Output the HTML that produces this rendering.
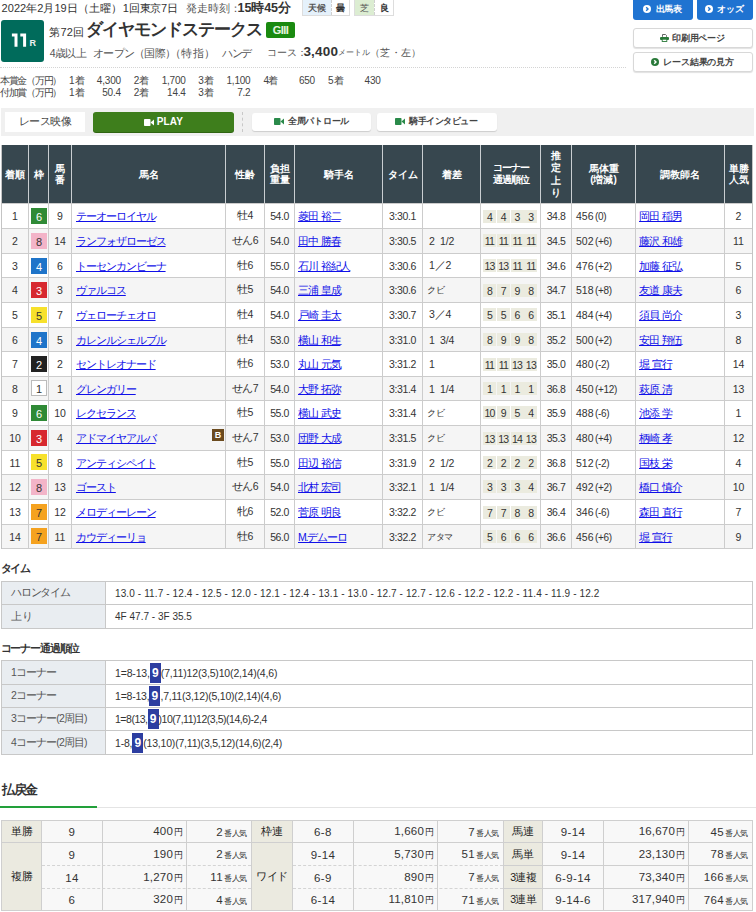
<!DOCTYPE html>
<html lang="ja"><head><meta charset="utf-8"><title>レース結果</title>
<style>
html,body{margin:0;padding:0;background:#fff;width:756px;height:912px;overflow:hidden;position:relative}
body{font-family:"Liberation Sans",sans-serif;}
body>div,body>svg{position:absolute}
.t{white-space:nowrap}
.c{display:flex;align-items:center;box-sizing:border-box;white-space:nowrap}

.a{color:#1010e8;text-decoration:underline;text-underline-offset:1px}
.n9{display:inline-block;background:#2c3da0;color:#fff;font-weight:bold;width:11px;height:20px;line-height:20px;text-align:center;font-size:12px;letter-spacing:0;margin:0}
.sm{font-size:8.5px;letter-spacing:0;margin-left:1px}
.sm2{font-size:8px;letter-spacing:-0.3px;margin-left:1px}

</style></head><body>
<div class="t" style="left:1.60px;top:1px;font-size:11px;line-height:14px;color:#333;"><span id="date" style="letter-spacing:0.034px">2022年2月19日（土曜）</span></div>
<div class="t" style="left:122.80px;top:1px;font-size:11px;line-height:14px;color:#333;"><span id="kai" style="letter-spacing:-0.200px">1回東京7日</span></div>
<div class="t" style="left:186.40px;top:1px;font-size:10.5px;line-height:14px;color:#555;"><span id="hasso" style="letter-spacing:-0.200px">発走時刻：</span></div>
<div class="t" style="left:237.60px;top:0.5px;font-size:12.5px;line-height:15px;color:#333;"><span id="time" style="letter-spacing:-0.120px"><b>15時45分</b></span></div>
<div style="left:302px;top:-1px;width:48px;height:17px;border:1px solid #ddd;box-sizing:border-box;background:#fff"></div>
<div style="left:303px;top:0px;width:28px;height:15px;background:#e5f1fb"></div>
<div style="left:331px;top:0px;width:0;height:15px;border-left:1px dashed #d0d0d0"></div>
<div class="c" style="left:302px;top:0px;width:29px;height:15px;justify-content:center;font-size:9px;color:#555;padding-top:1px;font-weight:bold"><span style="letter-spacing:0.000px">天候</span></div>
<div class="c" style="left:331px;top:0px;width:19px;height:15px;justify-content:center;font-size:9px;color:#333;padding-top:1px;font-weight:bold"><span style="letter-spacing:0.000px">曇</span></div>
<div style="left:354px;top:-1px;width:40px;height:17px;border:1px solid #ddd;box-sizing:border-box;background:#fff"></div>
<div style="left:355px;top:0px;width:19px;height:15px;background:#dcedd2"></div>
<div style="left:374px;top:0px;width:0;height:15px;border-left:1px dashed #d0d0d0"></div>
<div class="c" style="left:354px;top:0px;width:20px;height:15px;justify-content:center;font-size:9px;color:#555;padding-top:1px;"><span style="letter-spacing:0.000px">芝</span></div>
<div class="c" style="left:374px;top:0px;width:20px;height:15px;justify-content:center;font-size:9px;color:#333;padding-top:1px;font-weight:bold"><span style="letter-spacing:0.000px">良</span></div>
<div style="left:1px;top:20px;width:43px;height:42px;background:#006b5b;border-radius:3px"></div>
<svg style="position:absolute;left:0;top:0" width="50" height="60"><path d="M11.9 33.6 L17.5 33.6 L17.5 46.8 L14.5 46.8 L14.5 36.4 L11.9 36.4 Z M20.3 33.6 L26.1 33.6 L26.1 46.8 L23.1 46.8 L23.1 36.4 L20.3 36.4 Z" fill="#fff"/></svg>
<div class="t" style="left:29.60px;top:39px;font-size:9px;line-height:9px;color:#f0f0f0"><span style="letter-spacing:0.000px"><b>R</b></span></div>
<div class="t" style="left:49.20px;top:25px;font-size:11px;line-height:14px;color:#333;"><span id="dai" style="letter-spacing:0.264px">第72回</span></div>
<div class="t" style="left:86.00px;top:19px;font-size:16.5px;line-height:20px;color:#333;"><span id="title" style="letter-spacing:-1.000px"><b>ダイヤモンドステークス</b></span></div>
<div style="left:266px;top:22px;width:29px;height:16px;background:#1a8a10;border-radius:2px"></div>
<div class="c" style="left:266px;top:22px;width:29px;height:16px;justify-content:center;font-size:11px;color:#e8f5e0;"><span style="letter-spacing:-0.600px"><b>GIII</b></span></div>
<div class="t" style="left:49.80px;top:46px;font-size:10.5px;line-height:14px;color:#555;"><span id="sai" style="letter-spacing:-0.597px">4歳以上</span></div>
<div class="t" style="left:93.20px;top:46px;font-size:10.5px;line-height:14px;color:#555;"><span id="open" style="letter-spacing:-0.768px">オープン（国際）</span></div>
<div class="t" style="left:169.80px;top:46px;font-size:10.5px;line-height:14px;color:#555;"><span id="tokushi" style="letter-spacing:0.402px">（特指）</span></div>
<div class="t" style="left:222.00px;top:46px;font-size:10.5px;line-height:14px;color:#555;"><span id="hande" style="letter-spacing:-1.500px">ハンデ</span></div>
<div class="t" style="left:267.00px;top:46px;font-size:10px;line-height:14px;color:#555;"><span id="course" style="letter-spacing:-0.000px">コース：</span></div>
<div class="t" style="left:303.40px;top:44px;font-size:13.5px;line-height:16px;color:#333;"><span id="dist" style="letter-spacing:0.200px"><b>3,400</b></span></div>
<div class="t" style="left:338.00px;top:48px;font-size:8px;line-height:10px;color:#555;"><span id="meter" style="letter-spacing:0.000px">メートル</span></div>
<div class="t" style="left:370.00px;top:46px;font-size:10px;line-height:14px;color:#555;"><span id="shiba" style="letter-spacing:0.250px">（芝・左）</span></div>
<div style="left:0;top:67px;width:626px;height:0;border-top:1px dotted #d4d4d4"></div>
<div class="t" style="left:0.00px;top:75px;font-size:10px;line-height:12px;color:#444;"><span id="hon" style="letter-spacing:-1.264px">本賞金（万円）</span></div>
<div class="t" style="left:0.00px;top:87px;font-size:10px;line-height:12px;color:#444;"><span id="fuka" style="letter-spacing:-1.264px">付加賞（万円）</span></div>
<div class="t" style="left:69.00px;top:75px;font-size:10px;line-height:12px;color:#444;"><span id="ch10" style="letter-spacing:0.000px">1着</span></div>
<div class="t" style="left:85px;top:75px;width:35.9px;text-align:right;font-size:10px;line-height:12px;color:#444;letter-spacing:-0.2px">4,300</div>
<div class="t" style="left:69.00px;top:87px;font-size:10px;line-height:12px;color:#444;"><span id="ch20" style="letter-spacing:0.000px">1着</span></div>
<div class="t" style="left:85px;top:87px;width:35.9px;text-align:right;font-size:10px;line-height:12px;color:#444;letter-spacing:-0.2px">50.4</div>
<div class="t" style="left:133.80px;top:75px;font-size:10px;line-height:12px;color:#444;"><span id="ch11" style="letter-spacing:0.000px">2着</span></div>
<div class="t" style="left:149.4px;top:75px;width:36.3px;text-align:right;font-size:10px;line-height:12px;color:#444;letter-spacing:-0.2px">1,700</div>
<div class="t" style="left:133.80px;top:87px;font-size:10px;line-height:12px;color:#444;"><span id="ch21" style="letter-spacing:0.000px">2着</span></div>
<div class="t" style="left:149.4px;top:87px;width:36.3px;text-align:right;font-size:10px;line-height:12px;color:#444;letter-spacing:-0.2px">14.4</div>
<div class="t" style="left:198.30px;top:75px;font-size:10px;line-height:12px;color:#444;"><span id="ch12" style="letter-spacing:0.000px">3着</span></div>
<div class="t" style="left:213.9px;top:75px;width:36.6px;text-align:right;font-size:10px;line-height:12px;color:#444;letter-spacing:-0.2px">1,100</div>
<div class="t" style="left:198.30px;top:87px;font-size:10px;line-height:12px;color:#444;"><span id="ch22" style="letter-spacing:0.000px">3着</span></div>
<div class="t" style="left:213.9px;top:87px;width:36.6px;text-align:right;font-size:10px;line-height:12px;color:#444;letter-spacing:-0.2px">7.2</div>
<div class="t" style="left:263.60px;top:75px;font-size:10px;line-height:12px;color:#444;"><span id="ch13" style="letter-spacing:-1.000px">4着</span></div>
<div class="t" style="left:278.8px;top:75px;width:36.2px;text-align:right;font-size:10px;line-height:12px;color:#444;letter-spacing:-0.2px">650</div>
<div class="t" style="left:328.00px;top:75px;font-size:10px;line-height:12px;color:#444;"><span id="ch14" style="letter-spacing:0.000px">5着</span></div>
<div class="t" style="left:344px;top:75px;width:36.7px;text-align:right;font-size:10px;line-height:12px;color:#444;letter-spacing:-0.2px">430</div>
<div style="left:633px;top:-4px;width:60px;height:24px;background:#1f73d1;border-radius:3px"></div>
<div style="left:697px;top:-4px;width:56px;height:24px;background:#1f73d1;border-radius:3px"></div>
<div style="left:643px;top:5px;width:8px;height:8px;border-radius:50%;background:#fff"></div>
<svg style="position:absolute;left:643px;top:5px" width="8" height="8" viewBox="0 0 8 8"><path d="M3.2 2.2 L5 4 L3.2 5.8" stroke="#1f73d1" stroke-width="1.4" fill="none"/></svg>
<div class="t" style="left:655.80px;top:3px;font-size:9px;line-height:12px;color:#fff;"><span id="b1" style="letter-spacing:-0.400px"><b>出馬表</b></span></div>
<div style="left:705px;top:5px;width:8px;height:8px;border-radius:50%;background:#fff"></div>
<svg style="position:absolute;left:705px;top:5px" width="8" height="8" viewBox="0 0 8 8"><path d="M3.2 2.2 L5 4 L3.2 5.8" stroke="#1f73d1" stroke-width="1.4" fill="none"/></svg>
<div class="t" style="left:717.00px;top:3px;font-size:9px;line-height:12px;color:#fff;"><span id="b2" style="letter-spacing:0.000px"><b>オッズ</b></span></div>
<div style="left:633px;top:28px;width:120px;height:20px;background:#fff;border:1px solid #d8d8d8;border-radius:3px;box-sizing:border-box;box-shadow:0 1px 1px rgba(0,0,0,0.12)"></div>
<svg style="position:absolute;left:660px;top:34px" width="9" height="8" viewBox="0 0 9 8"><path d="M2.5 2.8 V0.5 H5.5 L6.5 1.5 V2.8" fill="#fff" stroke="#555" stroke-width="0.9"/><rect x="0" y="3" width="9" height="3" rx="1" fill="#2a7a3a"/><rect x="2.2" y="5.2" width="4.6" height="2.3" fill="#fff" stroke="#2a7a3a" stroke-width="0.9"/></svg>
<div class="t" style="left:672.00px;top:32px;font-size:9px;line-height:12px;color:#444;"><span id="b3" style="letter-spacing:-0.240px"><b>印刷用ページ</b></span></div>
<div style="left:633px;top:52px;width:120px;height:20px;background:#fff;border:1px solid #d8d8d8;border-radius:3px;box-sizing:border-box;box-shadow:0 1px 1px rgba(0,0,0,0.12)"></div>
<div style="left:651px;top:58px;width:8px;height:8px;border-radius:50%;background:#2a7a3a"></div>
<svg style="position:absolute;left:651px;top:58px" width="8" height="8" viewBox="0 0 8 8"><path d="M3.2 2.2 L5 4 L3.2 5.8" stroke="#fff" stroke-width="1.4" fill="none"/></svg>
<div class="t" style="left:663.00px;top:56px;font-size:9px;line-height:12px;color:#444;"><span id="b4" style="letter-spacing:-0.116px"><b>レース結果の見方</b></span></div>
<div style="left:1px;top:108px;width:753px;height:28px;background:#f0f0f0"></div>
<div style="left:5px;top:112px;width:80px;height:20px;background:#fff"></div>
<div class="c" style="left:5px;top:112px;width:80px;height:20px;justify-content:center;font-size:10.5px;color:#444;"><span id="eizo" style="letter-spacing:-0.650px">レース映像</span></div>
<div style="left:93px;top:112px;width:141px;height:20px;background:#3e7e1c;border-radius:3px;box-shadow:0 1px 0 #2f6512"></div>
<svg style="position:absolute;left:144px;top:119px" width="10" height="7" viewBox="0 0 10 7"><rect x="0" y="0" width="6.5" height="7" rx="0.8" fill="#fff"/><path d="M6.5 3.5 L10 0.5 L10 6.5 Z" fill="#fff"/></svg>
<div class="t" style="left:156.80px;top:116px;font-size:10px;line-height:12px;color:#fff;"><span id="play" style="letter-spacing:0.133px"><b>PLAY</b></span></div>
<div style="left:242px;top:112px;width:0;height:20px;border-left:1px dashed #c8c8c8"></div>
<div style="left:252px;top:113px;width:119px;height:18px;background:#fff;border-radius:3px;box-shadow:0 1px 1px rgba(0,0,0,0.15)"></div>
<svg style="position:absolute;left:274px;top:118px" width="10" height="7" viewBox="0 0 10 7"><rect x="0" y="0" width="6.5" height="7" rx="0.8" fill="#2a8a4a"/><path d="M6.5 3.5 L10 0.5 L10 6.5 Z" fill="#2a8a4a"/></svg>
<div class="t" style="left:287.80px;top:115px;font-size:9px;line-height:12px;color:#444;"><span id="patrol" style="letter-spacing:-0.236px"><b>全周パトロール</b></span></div>
<div style="left:377px;top:113px;width:120px;height:18px;background:#fff;border-radius:3px;box-shadow:0 1px 1px rgba(0,0,0,0.15)"></div>
<svg style="position:absolute;left:395px;top:118px" width="10" height="7" viewBox="0 0 10 7"><rect x="0" y="0" width="6.5" height="7" rx="0.8" fill="#2a8a4a"/><path d="M6.5 3.5 L10 0.5 L10 6.5 Z" fill="#2a8a4a"/></svg>
<div class="t" style="left:409.00px;top:115px;font-size:9px;line-height:12px;color:#444;"><span id="interview" style="letter-spacing:-0.428px"><b>騎手インタビュー</b></span></div>
<div style="left:1px;top:145px;width:752px;height:58px;background:#37474f"></div>
<div style="left:28px;top:145px;width:1px;height:58px;background:#c9ced1;"></div>
<div style="left:48px;top:145px;width:1px;height:58px;background:#c9ced1;"></div>
<div style="left:71px;top:145px;width:1px;height:58px;background:#c9ced1;"></div>
<div style="left:225px;top:145px;width:1px;height:58px;background:#c9ced1;"></div>
<div style="left:264px;top:145px;width:1px;height:58px;background:#c9ced1;"></div>
<div style="left:294px;top:145px;width:1px;height:58px;background:#c9ced1;"></div>
<div style="left:382px;top:145px;width:1px;height:58px;background:#c9ced1;"></div>
<div style="left:422px;top:145px;width:1px;height:58px;background:#c9ced1;"></div>
<div style="left:480px;top:145px;width:1px;height:58px;background:#c9ced1;"></div>
<div style="left:540px;top:145px;width:1px;height:58px;background:#c9ced1;"></div>
<div style="left:571px;top:145px;width:1px;height:58px;background:#c9ced1;"></div>
<div style="left:635px;top:145px;width:1px;height:58px;background:#c9ced1;"></div>
<div style="left:724px;top:145px;width:1px;height:58px;background:#c9ced1;"></div>
<div class="c" style="left:2px;top:145px;width:26px;height:58px;justify-content:center;font-size:10px;line-height:11px;color:#fff;font-weight:bold;text-align:center;"><span style="letter-spacing:0.000px">着順</span></div>
<div class="c" style="left:29px;top:145px;width:19px;height:58px;justify-content:center;font-size:10px;line-height:11px;color:#fff;font-weight:bold;text-align:center;"><span style="letter-spacing:0.000px">枠</span></div>
<div class="c" style="left:49px;top:145px;width:22px;height:58px;justify-content:center;font-size:10px;line-height:11px;color:#fff;font-weight:bold;text-align:center;"><span style="letter-spacing:0.000px">馬<br>番</span></div>
<div class="c" style="left:72px;top:145px;width:153px;height:58px;justify-content:center;font-size:10px;line-height:11px;color:#fff;font-weight:bold;text-align:center;"><span style="letter-spacing:0.000px">馬名</span></div>
<div class="c" style="left:226px;top:145px;width:38px;height:58px;justify-content:center;font-size:10px;line-height:11px;color:#fff;font-weight:bold;text-align:center;"><span style="letter-spacing:0.000px">性齢</span></div>
<div class="c" style="left:265px;top:145px;width:29px;height:58px;justify-content:center;font-size:10px;line-height:11px;color:#fff;font-weight:bold;text-align:center;"><span style="letter-spacing:0.000px">負担<br>重量</span></div>
<div class="c" style="left:295px;top:145px;width:87px;height:58px;justify-content:center;font-size:10px;line-height:11px;color:#fff;font-weight:bold;text-align:center;"><span style="letter-spacing:0.000px">騎手名</span></div>
<div class="c" style="left:383px;top:145px;width:39px;height:58px;justify-content:center;font-size:10px;line-height:11px;color:#fff;font-weight:bold;text-align:center;"><span style="letter-spacing:0.000px">タイム</span></div>
<div class="c" style="left:423px;top:145px;width:57px;height:58px;justify-content:center;font-size:10px;line-height:11px;color:#fff;font-weight:bold;text-align:center;"><span style="letter-spacing:0.000px">着差</span></div>
<div class="c" style="left:481px;top:145px;width:59px;height:58px;justify-content:center;font-size:10px;line-height:12px;color:#fff;font-weight:bold;text-align:center;"><span style="letter-spacing:-1.000px">コーナー<br>通過順位</span></div>
<div class="c" style="left:541px;top:145px;width:30px;height:58px;justify-content:center;font-size:10px;line-height:12.5px;color:#fff;font-weight:bold;text-align:center;padding-top:1px;"><span style="letter-spacing:0.000px">推<br>定<br>上<br>り</span></div>
<div class="c" style="left:572px;top:145px;width:63px;height:58px;justify-content:center;font-size:10px;line-height:11px;color:#fff;font-weight:bold;text-align:center;"><span style="letter-spacing:0.000px">馬体重<br>(増減)</span></div>
<div class="c" style="left:636px;top:145px;width:88px;height:58px;justify-content:center;font-size:10px;line-height:11px;color:#fff;font-weight:bold;text-align:center;"><span style="letter-spacing:0.000px">調教師名</span></div>
<div class="c" style="left:725px;top:145px;width:27px;height:58px;justify-content:center;font-size:10px;line-height:11px;color:#fff;font-weight:bold;text-align:center;"><span style="letter-spacing:0.000px">単勝<br>人気</span></div>
<div style="left:2px;top:204px;width:750px;height:24px;background:#fff"></div>
<div style="left:2px;top:229px;width:750px;height:24px;background:#f5f5f5"></div>
<div style="left:2px;top:254px;width:750px;height:23px;background:#fff"></div>
<div style="left:2px;top:278px;width:750px;height:24px;background:#f5f5f5"></div>
<div style="left:2px;top:303px;width:750px;height:24px;background:#fff"></div>
<div style="left:2px;top:328px;width:750px;height:23px;background:#f5f5f5"></div>
<div style="left:2px;top:352px;width:750px;height:24px;background:#fff"></div>
<div style="left:2px;top:377px;width:750px;height:23px;background:#f5f5f5"></div>
<div style="left:2px;top:401px;width:750px;height:24px;background:#fff"></div>
<div style="left:2px;top:426px;width:750px;height:24px;background:#f5f5f5"></div>
<div style="left:2px;top:451px;width:750px;height:23px;background:#fff"></div>
<div style="left:2px;top:475px;width:750px;height:24px;background:#f5f5f5"></div>
<div style="left:2px;top:500px;width:750px;height:24px;background:#fff"></div>
<div style="left:2px;top:525px;width:750px;height:23px;background:#f5f5f5"></div>
<div style="left:1px;top:203px;width:752px;height:1px;background:#cccccc;"></div>
<div style="left:1px;top:228px;width:752px;height:1px;background:#cccccc;"></div>
<div style="left:1px;top:253px;width:752px;height:1px;background:#cccccc;"></div>
<div style="left:1px;top:277px;width:752px;height:1px;background:#cccccc;"></div>
<div style="left:1px;top:302px;width:752px;height:1px;background:#cccccc;"></div>
<div style="left:1px;top:327px;width:752px;height:1px;background:#cccccc;"></div>
<div style="left:1px;top:351px;width:752px;height:1px;background:#cccccc;"></div>
<div style="left:1px;top:376px;width:752px;height:1px;background:#cccccc;"></div>
<div style="left:1px;top:400px;width:752px;height:1px;background:#cccccc;"></div>
<div style="left:1px;top:425px;width:752px;height:1px;background:#cccccc;"></div>
<div style="left:1px;top:450px;width:752px;height:1px;background:#cccccc;"></div>
<div style="left:1px;top:474px;width:752px;height:1px;background:#cccccc;"></div>
<div style="left:1px;top:499px;width:752px;height:1px;background:#cccccc;"></div>
<div style="left:1px;top:524px;width:752px;height:1px;background:#cccccc;"></div>
<div style="left:1px;top:548px;width:752px;height:1px;background:#cccccc;"></div>
<div style="left:1px;top:203px;width:1px;height:346px;background:#cccccc;"></div>
<div style="left:28px;top:203px;width:1px;height:346px;background:#cccccc;"></div>
<div style="left:48px;top:203px;width:1px;height:346px;background:#cccccc;"></div>
<div style="left:71px;top:203px;width:1px;height:346px;background:#cccccc;"></div>
<div style="left:225px;top:203px;width:1px;height:346px;background:#cccccc;"></div>
<div style="left:264px;top:203px;width:1px;height:346px;background:#cccccc;"></div>
<div style="left:294px;top:203px;width:1px;height:346px;background:#cccccc;"></div>
<div style="left:382px;top:203px;width:1px;height:346px;background:#cccccc;"></div>
<div style="left:422px;top:203px;width:1px;height:346px;background:#cccccc;"></div>
<div style="left:480px;top:203px;width:1px;height:346px;background:#cccccc;"></div>
<div style="left:540px;top:203px;width:1px;height:346px;background:#cccccc;"></div>
<div style="left:571px;top:203px;width:1px;height:346px;background:#cccccc;"></div>
<div style="left:635px;top:203px;width:1px;height:346px;background:#cccccc;"></div>
<div style="left:724px;top:203px;width:1px;height:346px;background:#cccccc;"></div>
<div style="left:752px;top:203px;width:1px;height:346px;background:#cccccc;"></div>
<div style="left:1px;top:145px;width:1px;height:404px;background:#c4c4c4;"></div>
<div style="left:752px;top:145px;width:1px;height:404px;background:#c4c4c4;"></div>
<div class="c" style="left:2px;top:204px;width:26px;height:24px;justify-content:center;font-size:10.5px;color:#333;padding-top:0px;"><span style="letter-spacing:0.000px">1</span></div>
<div class="c" style="left:31px;top:208px;width:16px;height:16px;background:#2f8a36;justify-content:center;font-size:11px;color:#fff;padding-top:1px">6</div>
<div class="c" style="left:49px;top:204px;width:22px;height:24px;justify-content:center;font-size:10.5px;color:#333;padding-top:0px;"><span style="letter-spacing:0.000px">9</span></div>
<div class="c" style="left:72px;top:204px;width:153px;height:24px;justify-content:flex-start;padding-left:4px;font-size:10.5px;padding-top:2px;"><span style="letter-spacing:-1.050px"><span class="a">テーオーロイヤル</span></span></div>
<div class="c" style="left:226px;top:204px;width:38px;height:24px;justify-content:center;font-size:10.5px;color:#333;padding-top:0px;"><span style="letter-spacing:-0.400px">牡4</span></div>
<div class="c" style="left:265px;top:204px;width:29px;height:24px;justify-content:center;font-size:10.5px;color:#333;padding-top:0px;"><span style="letter-spacing:-0.500px">54.0</span></div>
<div class="c" style="left:295px;top:204px;width:87px;height:24px;justify-content:flex-start;padding-left:3px;font-size:10.5px;padding-top:2px;"><span style="letter-spacing:-1.200px"><span class="a" style="word-spacing:1.5px">菱田 裕二</span></span></div>
<div class="c" style="left:383px;top:204px;width:39px;height:24px;justify-content:center;font-size:10.5px;color:#333;padding-top:0px;"><span style="letter-spacing:-0.350px">3:30.1</span></div>
<div class="c" style="left:423px;top:204px;width:57px;height:24px;justify-content:flex-start;padding-left:6px;font-size:10.5px;color:#333;padding-top:0px;"><span style="letter-spacing:-0.200px"></span></div>
<div class="c" style="left:483.0px;top:210px;width:13px;height:13px;background:#ebebdf;justify-content:center;font-size:10.5px;color:#333;letter-spacing:-0.8px;padding-top:1px">4</div>
<div class="c" style="left:496.8px;top:210px;width:13px;height:13px;background:#ebebdf;justify-content:center;font-size:10.5px;color:#333;letter-spacing:-0.8px;padding-top:1px">4</div>
<div class="c" style="left:510.6px;top:210px;width:13px;height:13px;background:#ebebdf;justify-content:center;font-size:10.5px;color:#333;letter-spacing:-0.8px;padding-top:1px">3</div>
<div class="c" style="left:524.4px;top:210px;width:13px;height:13px;background:#ebebdf;justify-content:center;font-size:10.5px;color:#333;letter-spacing:-0.8px;padding-top:1px">3</div>
<div class="c" style="left:541px;top:204px;width:30px;height:24px;justify-content:center;font-size:10.5px;color:#333;padding-top:0px;"><span style="letter-spacing:-0.500px">34.8</span></div>
<div class="c" style="left:572px;top:204px;width:63px;height:24px;justify-content:flex-start;padding-left:4px;font-size:10.5px;color:#333;padding-top:0px;"><span style="letter-spacing:0.000px">456<span style="font-size:10px;margin-left:1.5px;letter-spacing:-0.3px">(0)</span></span></div>
<div class="c" style="left:636px;top:204px;width:88px;height:24px;justify-content:flex-start;padding-left:3px;font-size:10.5px;padding-top:2px;"><span style="letter-spacing:-1.200px"><span class="a" style="word-spacing:1.5px">岡田 稲男</span></span></div>
<div class="c" style="left:725px;top:204px;width:27px;height:24px;justify-content:center;font-size:10.5px;color:#333;padding-top:0px;"><span style="letter-spacing:0.000px">2</span></div>
<div class="c" style="left:2px;top:229px;width:26px;height:24px;justify-content:center;font-size:10.5px;color:#333;padding-top:0px;"><span style="letter-spacing:0.000px">2</span></div>
<div class="c" style="left:31px;top:233px;width:16px;height:16px;background:#f3b4c8;justify-content:center;font-size:11px;color:#333;padding-top:1px">8</div>
<div class="c" style="left:49px;top:229px;width:22px;height:24px;justify-content:center;font-size:10.5px;color:#333;padding-top:0px;"><span style="letter-spacing:0.000px">14</span></div>
<div class="c" style="left:72px;top:229px;width:153px;height:24px;justify-content:flex-start;padding-left:4px;font-size:10.5px;padding-top:2px;"><span style="letter-spacing:-1.050px"><span class="a">ランフォザローゼス</span></span></div>
<div class="c" style="left:226px;top:229px;width:38px;height:24px;justify-content:center;font-size:10.5px;color:#333;padding-top:0px;"><span style="letter-spacing:-0.400px">せん6</span></div>
<div class="c" style="left:265px;top:229px;width:29px;height:24px;justify-content:center;font-size:10.5px;color:#333;padding-top:0px;"><span style="letter-spacing:-0.500px">54.0</span></div>
<div class="c" style="left:295px;top:229px;width:87px;height:24px;justify-content:flex-start;padding-left:3px;font-size:10.5px;padding-top:2px;"><span style="letter-spacing:-1.200px"><span class="a" style="word-spacing:1.5px">田中 勝春</span></span></div>
<div class="c" style="left:383px;top:229px;width:39px;height:24px;justify-content:center;font-size:10.5px;color:#333;padding-top:0px;"><span style="letter-spacing:-0.350px">3:30.5</span></div>
<div class="c" style="left:423px;top:229px;width:57px;height:24px;justify-content:flex-start;padding-left:6px;font-size:10.5px;color:#333;padding-top:0px;"><span style="letter-spacing:-0.200px">2&nbsp;&nbsp;1/2</span></div>
<div class="c" style="left:483.0px;top:234px;width:13px;height:13px;background:#ebebdf;justify-content:center;font-size:10.5px;color:#333;letter-spacing:-0.8px;padding-top:1px">11</div>
<div class="c" style="left:496.8px;top:234px;width:13px;height:13px;background:#ebebdf;justify-content:center;font-size:10.5px;color:#333;letter-spacing:-0.8px;padding-top:1px">11</div>
<div class="c" style="left:510.6px;top:234px;width:13px;height:13px;background:#ebebdf;justify-content:center;font-size:10.5px;color:#333;letter-spacing:-0.8px;padding-top:1px">11</div>
<div class="c" style="left:524.4px;top:234px;width:13px;height:13px;background:#ebebdf;justify-content:center;font-size:10.5px;color:#333;letter-spacing:-0.8px;padding-top:1px">11</div>
<div class="c" style="left:541px;top:229px;width:30px;height:24px;justify-content:center;font-size:10.5px;color:#333;padding-top:0px;"><span style="letter-spacing:-0.500px">34.5</span></div>
<div class="c" style="left:572px;top:229px;width:63px;height:24px;justify-content:flex-start;padding-left:4px;font-size:10.5px;color:#333;padding-top:0px;"><span style="letter-spacing:0.000px">502<span style="font-size:10px;margin-left:1.5px;letter-spacing:-0.3px">(+6)</span></span></div>
<div class="c" style="left:636px;top:229px;width:88px;height:24px;justify-content:flex-start;padding-left:3px;font-size:10.5px;padding-top:2px;"><span style="letter-spacing:-1.200px"><span class="a" style="word-spacing:1.5px">藤沢 和雄</span></span></div>
<div class="c" style="left:725px;top:229px;width:27px;height:24px;justify-content:center;font-size:10.5px;color:#333;padding-top:0px;"><span style="letter-spacing:0.000px">11</span></div>
<div class="c" style="left:2px;top:254px;width:26px;height:23px;justify-content:center;font-size:10.5px;color:#333;padding-top:0px;"><span style="letter-spacing:0.000px">3</span></div>
<div class="c" style="left:31px;top:258px;width:16px;height:16px;background:#1e74c9;justify-content:center;font-size:11px;color:#fff;padding-top:1px">4</div>
<div class="c" style="left:49px;top:254px;width:22px;height:23px;justify-content:center;font-size:10.5px;color:#333;padding-top:0px;"><span style="letter-spacing:0.000px">6</span></div>
<div class="c" style="left:72px;top:254px;width:153px;height:23px;justify-content:flex-start;padding-left:4px;font-size:10.5px;padding-top:2px;"><span style="letter-spacing:-1.050px"><span class="a">トーセンカンビーナ</span></span></div>
<div class="c" style="left:226px;top:254px;width:38px;height:23px;justify-content:center;font-size:10.5px;color:#333;padding-top:0px;"><span style="letter-spacing:-0.400px">牡6</span></div>
<div class="c" style="left:265px;top:254px;width:29px;height:23px;justify-content:center;font-size:10.5px;color:#333;padding-top:0px;"><span style="letter-spacing:-0.500px">55.0</span></div>
<div class="c" style="left:295px;top:254px;width:87px;height:23px;justify-content:flex-start;padding-left:3px;font-size:10.5px;padding-top:2px;"><span style="letter-spacing:-1.200px"><span class="a" style="word-spacing:1.5px">石川 裕紀人</span></span></div>
<div class="c" style="left:383px;top:254px;width:39px;height:23px;justify-content:center;font-size:10.5px;color:#333;padding-top:0px;"><span style="letter-spacing:-0.350px">3:30.6</span></div>
<div class="c" style="left:423px;top:254px;width:57px;height:23px;justify-content:flex-start;padding-left:6px;font-size:10.5px;color:#333;padding-top:0px;"><span style="letter-spacing:-0.200px">1／2</span></div>
<div class="c" style="left:483.0px;top:259px;width:13px;height:13px;background:#ebebdf;justify-content:center;font-size:10.5px;color:#333;letter-spacing:-0.8px;padding-top:1px">13</div>
<div class="c" style="left:496.8px;top:259px;width:13px;height:13px;background:#ebebdf;justify-content:center;font-size:10.5px;color:#333;letter-spacing:-0.8px;padding-top:1px">13</div>
<div class="c" style="left:510.6px;top:259px;width:13px;height:13px;background:#ebebdf;justify-content:center;font-size:10.5px;color:#333;letter-spacing:-0.8px;padding-top:1px">11</div>
<div class="c" style="left:524.4px;top:259px;width:13px;height:13px;background:#ebebdf;justify-content:center;font-size:10.5px;color:#333;letter-spacing:-0.8px;padding-top:1px">11</div>
<div class="c" style="left:541px;top:254px;width:30px;height:23px;justify-content:center;font-size:10.5px;color:#333;padding-top:0px;"><span style="letter-spacing:-0.500px">34.6</span></div>
<div class="c" style="left:572px;top:254px;width:63px;height:23px;justify-content:flex-start;padding-left:4px;font-size:10.5px;color:#333;padding-top:0px;"><span style="letter-spacing:0.000px">476<span style="font-size:10px;margin-left:1.5px;letter-spacing:-0.3px">(+2)</span></span></div>
<div class="c" style="left:636px;top:254px;width:88px;height:23px;justify-content:flex-start;padding-left:3px;font-size:10.5px;padding-top:2px;"><span style="letter-spacing:-1.200px"><span class="a" style="word-spacing:1.5px">加藤 征弘</span></span></div>
<div class="c" style="left:725px;top:254px;width:27px;height:23px;justify-content:center;font-size:10.5px;color:#333;padding-top:0px;"><span style="letter-spacing:0.000px">5</span></div>
<div class="c" style="left:2px;top:278px;width:26px;height:24px;justify-content:center;font-size:10.5px;color:#333;padding-top:0px;"><span style="letter-spacing:0.000px">4</span></div>
<div class="c" style="left:31px;top:282px;width:16px;height:16px;background:#d7282f;justify-content:center;font-size:11px;color:#fff;padding-top:1px">3</div>
<div class="c" style="left:49px;top:278px;width:22px;height:24px;justify-content:center;font-size:10.5px;color:#333;padding-top:0px;"><span style="letter-spacing:0.000px">3</span></div>
<div class="c" style="left:72px;top:278px;width:153px;height:24px;justify-content:flex-start;padding-left:4px;font-size:10.5px;padding-top:2px;"><span style="letter-spacing:-1.050px"><span class="a">ヴァルコス</span></span></div>
<div class="c" style="left:226px;top:278px;width:38px;height:24px;justify-content:center;font-size:10.5px;color:#333;padding-top:0px;"><span style="letter-spacing:-0.400px">牡5</span></div>
<div class="c" style="left:265px;top:278px;width:29px;height:24px;justify-content:center;font-size:10.5px;color:#333;padding-top:0px;"><span style="letter-spacing:-0.500px">54.0</span></div>
<div class="c" style="left:295px;top:278px;width:87px;height:24px;justify-content:flex-start;padding-left:3px;font-size:10.5px;padding-top:2px;"><span style="letter-spacing:-1.200px"><span class="a" style="word-spacing:1.5px">三浦 皇成</span></span></div>
<div class="c" style="left:383px;top:278px;width:39px;height:24px;justify-content:center;font-size:10.5px;color:#333;padding-top:0px;"><span style="letter-spacing:-0.350px">3:30.6</span></div>
<div class="c" style="left:423px;top:278px;width:57px;height:24px;justify-content:flex-start;padding-left:4px;font-size:9px;color:#333;padding-top:1px;"><span style="letter-spacing:-0.300px">クビ</span></div>
<div class="c" style="left:483.0px;top:284px;width:13px;height:13px;background:#ebebdf;justify-content:center;font-size:10.5px;color:#333;letter-spacing:-0.8px;padding-top:1px">8</div>
<div class="c" style="left:496.8px;top:284px;width:13px;height:13px;background:#ebebdf;justify-content:center;font-size:10.5px;color:#333;letter-spacing:-0.8px;padding-top:1px">7</div>
<div class="c" style="left:510.6px;top:284px;width:13px;height:13px;background:#ebebdf;justify-content:center;font-size:10.5px;color:#333;letter-spacing:-0.8px;padding-top:1px">9</div>
<div class="c" style="left:524.4px;top:284px;width:13px;height:13px;background:#ebebdf;justify-content:center;font-size:10.5px;color:#333;letter-spacing:-0.8px;padding-top:1px">8</div>
<div class="c" style="left:541px;top:278px;width:30px;height:24px;justify-content:center;font-size:10.5px;color:#333;padding-top:0px;"><span style="letter-spacing:-0.500px">34.7</span></div>
<div class="c" style="left:572px;top:278px;width:63px;height:24px;justify-content:flex-start;padding-left:4px;font-size:10.5px;color:#333;padding-top:0px;"><span style="letter-spacing:0.000px">518<span style="font-size:10px;margin-left:1.5px;letter-spacing:-0.3px">(+8)</span></span></div>
<div class="c" style="left:636px;top:278px;width:88px;height:24px;justify-content:flex-start;padding-left:3px;font-size:10.5px;padding-top:2px;"><span style="letter-spacing:-1.200px"><span class="a" style="word-spacing:1.5px">友道 康夫</span></span></div>
<div class="c" style="left:725px;top:278px;width:27px;height:24px;justify-content:center;font-size:10.5px;color:#333;padding-top:0px;"><span style="letter-spacing:0.000px">6</span></div>
<div class="c" style="left:2px;top:303px;width:26px;height:24px;justify-content:center;font-size:10.5px;color:#333;padding-top:0px;"><span style="letter-spacing:0.000px">5</span></div>
<div class="c" style="left:31px;top:307px;width:16px;height:16px;background:#f7e12b;justify-content:center;font-size:11px;color:#333;padding-top:1px">5</div>
<div class="c" style="left:49px;top:303px;width:22px;height:24px;justify-content:center;font-size:10.5px;color:#333;padding-top:0px;"><span style="letter-spacing:0.000px">7</span></div>
<div class="c" style="left:72px;top:303px;width:153px;height:24px;justify-content:flex-start;padding-left:4px;font-size:10.5px;padding-top:2px;"><span style="letter-spacing:-1.050px"><span class="a">ヴェローチェオロ</span></span></div>
<div class="c" style="left:226px;top:303px;width:38px;height:24px;justify-content:center;font-size:10.5px;color:#333;padding-top:0px;"><span style="letter-spacing:-0.400px">牡4</span></div>
<div class="c" style="left:265px;top:303px;width:29px;height:24px;justify-content:center;font-size:10.5px;color:#333;padding-top:0px;"><span style="letter-spacing:-0.500px">54.0</span></div>
<div class="c" style="left:295px;top:303px;width:87px;height:24px;justify-content:flex-start;padding-left:3px;font-size:10.5px;padding-top:2px;"><span style="letter-spacing:-1.200px"><span class="a" style="word-spacing:1.5px">戸崎 圭太</span></span></div>
<div class="c" style="left:383px;top:303px;width:39px;height:24px;justify-content:center;font-size:10.5px;color:#333;padding-top:0px;"><span style="letter-spacing:-0.350px">3:30.7</span></div>
<div class="c" style="left:423px;top:303px;width:57px;height:24px;justify-content:flex-start;padding-left:6px;font-size:10.5px;color:#333;padding-top:0px;"><span style="letter-spacing:-0.200px">3／4</span></div>
<div class="c" style="left:483.0px;top:308px;width:13px;height:13px;background:#ebebdf;justify-content:center;font-size:10.5px;color:#333;letter-spacing:-0.8px;padding-top:1px">5</div>
<div class="c" style="left:496.8px;top:308px;width:13px;height:13px;background:#ebebdf;justify-content:center;font-size:10.5px;color:#333;letter-spacing:-0.8px;padding-top:1px">5</div>
<div class="c" style="left:510.6px;top:308px;width:13px;height:13px;background:#ebebdf;justify-content:center;font-size:10.5px;color:#333;letter-spacing:-0.8px;padding-top:1px">6</div>
<div class="c" style="left:524.4px;top:308px;width:13px;height:13px;background:#ebebdf;justify-content:center;font-size:10.5px;color:#333;letter-spacing:-0.8px;padding-top:1px">6</div>
<div class="c" style="left:541px;top:303px;width:30px;height:24px;justify-content:center;font-size:10.5px;color:#333;padding-top:0px;"><span style="letter-spacing:-0.500px">35.1</span></div>
<div class="c" style="left:572px;top:303px;width:63px;height:24px;justify-content:flex-start;padding-left:4px;font-size:10.5px;color:#333;padding-top:0px;"><span style="letter-spacing:0.000px">484<span style="font-size:10px;margin-left:1.5px;letter-spacing:-0.3px">(+4)</span></span></div>
<div class="c" style="left:636px;top:303px;width:88px;height:24px;justify-content:flex-start;padding-left:3px;font-size:10.5px;padding-top:2px;"><span style="letter-spacing:-1.200px"><span class="a" style="word-spacing:1.5px">須貝 尚介</span></span></div>
<div class="c" style="left:725px;top:303px;width:27px;height:24px;justify-content:center;font-size:10.5px;color:#333;padding-top:0px;"><span style="letter-spacing:0.000px">3</span></div>
<div class="c" style="left:2px;top:328px;width:26px;height:23px;justify-content:center;font-size:10.5px;color:#333;padding-top:0px;"><span style="letter-spacing:0.000px">6</span></div>
<div class="c" style="left:31px;top:332px;width:16px;height:16px;background:#1e74c9;justify-content:center;font-size:11px;color:#fff;padding-top:1px">4</div>
<div class="c" style="left:49px;top:328px;width:22px;height:23px;justify-content:center;font-size:10.5px;color:#333;padding-top:0px;"><span style="letter-spacing:0.000px">5</span></div>
<div class="c" style="left:72px;top:328px;width:153px;height:23px;justify-content:flex-start;padding-left:4px;font-size:10.5px;padding-top:2px;"><span style="letter-spacing:-1.050px"><span class="a">カレンルシェルブル</span></span></div>
<div class="c" style="left:226px;top:328px;width:38px;height:23px;justify-content:center;font-size:10.5px;color:#333;padding-top:0px;"><span style="letter-spacing:-0.400px">牡4</span></div>
<div class="c" style="left:265px;top:328px;width:29px;height:23px;justify-content:center;font-size:10.5px;color:#333;padding-top:0px;"><span style="letter-spacing:-0.500px">53.0</span></div>
<div class="c" style="left:295px;top:328px;width:87px;height:23px;justify-content:flex-start;padding-left:3px;font-size:10.5px;padding-top:2px;"><span style="letter-spacing:-1.200px"><span class="a" style="word-spacing:1.5px">横山 和生</span></span></div>
<div class="c" style="left:383px;top:328px;width:39px;height:23px;justify-content:center;font-size:10.5px;color:#333;padding-top:0px;"><span style="letter-spacing:-0.350px">3:31.0</span></div>
<div class="c" style="left:423px;top:328px;width:57px;height:23px;justify-content:flex-start;padding-left:6px;font-size:10.5px;color:#333;padding-top:0px;"><span style="letter-spacing:-0.200px">1&nbsp;&nbsp;3/4</span></div>
<div class="c" style="left:483.0px;top:333px;width:13px;height:13px;background:#ebebdf;justify-content:center;font-size:10.5px;color:#333;letter-spacing:-0.8px;padding-top:1px">8</div>
<div class="c" style="left:496.8px;top:333px;width:13px;height:13px;background:#ebebdf;justify-content:center;font-size:10.5px;color:#333;letter-spacing:-0.8px;padding-top:1px">9</div>
<div class="c" style="left:510.6px;top:333px;width:13px;height:13px;background:#ebebdf;justify-content:center;font-size:10.5px;color:#333;letter-spacing:-0.8px;padding-top:1px">9</div>
<div class="c" style="left:524.4px;top:333px;width:13px;height:13px;background:#ebebdf;justify-content:center;font-size:10.5px;color:#333;letter-spacing:-0.8px;padding-top:1px">8</div>
<div class="c" style="left:541px;top:328px;width:30px;height:23px;justify-content:center;font-size:10.5px;color:#333;padding-top:0px;"><span style="letter-spacing:-0.500px">35.2</span></div>
<div class="c" style="left:572px;top:328px;width:63px;height:23px;justify-content:flex-start;padding-left:4px;font-size:10.5px;color:#333;padding-top:0px;"><span style="letter-spacing:0.000px">500<span style="font-size:10px;margin-left:1.5px;letter-spacing:-0.3px">(+2)</span></span></div>
<div class="c" style="left:636px;top:328px;width:88px;height:23px;justify-content:flex-start;padding-left:3px;font-size:10.5px;padding-top:2px;"><span style="letter-spacing:-1.200px"><span class="a" style="word-spacing:1.5px">安田 翔伍</span></span></div>
<div class="c" style="left:725px;top:328px;width:27px;height:23px;justify-content:center;font-size:10.5px;color:#333;padding-top:0px;"><span style="letter-spacing:0.000px">8</span></div>
<div class="c" style="left:2px;top:352px;width:26px;height:24px;justify-content:center;font-size:10.5px;color:#333;padding-top:0px;"><span style="letter-spacing:0.000px">7</span></div>
<div class="c" style="left:31px;top:356px;width:16px;height:16px;background:#222;justify-content:center;font-size:11px;color:#fff;padding-top:1px">2</div>
<div class="c" style="left:49px;top:352px;width:22px;height:24px;justify-content:center;font-size:10.5px;color:#333;padding-top:0px;"><span style="letter-spacing:0.000px">2</span></div>
<div class="c" style="left:72px;top:352px;width:153px;height:24px;justify-content:flex-start;padding-left:4px;font-size:10.5px;padding-top:2px;"><span style="letter-spacing:-1.050px"><span class="a">セントレオナード</span></span></div>
<div class="c" style="left:226px;top:352px;width:38px;height:24px;justify-content:center;font-size:10.5px;color:#333;padding-top:0px;"><span style="letter-spacing:-0.400px">牡6</span></div>
<div class="c" style="left:265px;top:352px;width:29px;height:24px;justify-content:center;font-size:10.5px;color:#333;padding-top:0px;"><span style="letter-spacing:-0.500px">53.0</span></div>
<div class="c" style="left:295px;top:352px;width:87px;height:24px;justify-content:flex-start;padding-left:3px;font-size:10.5px;padding-top:2px;"><span style="letter-spacing:-1.200px"><span class="a" style="word-spacing:1.5px">丸山 元気</span></span></div>
<div class="c" style="left:383px;top:352px;width:39px;height:24px;justify-content:center;font-size:10.5px;color:#333;padding-top:0px;"><span style="letter-spacing:-0.350px">3:31.2</span></div>
<div class="c" style="left:423px;top:352px;width:57px;height:24px;justify-content:flex-start;padding-left:6px;font-size:10.5px;color:#333;padding-top:0px;"><span style="letter-spacing:-0.200px">1</span></div>
<div class="c" style="left:483.0px;top:358px;width:13px;height:13px;background:#ebebdf;justify-content:center;font-size:10.5px;color:#333;letter-spacing:-0.8px;padding-top:1px">11</div>
<div class="c" style="left:496.8px;top:358px;width:13px;height:13px;background:#ebebdf;justify-content:center;font-size:10.5px;color:#333;letter-spacing:-0.8px;padding-top:1px">11</div>
<div class="c" style="left:510.6px;top:358px;width:13px;height:13px;background:#ebebdf;justify-content:center;font-size:10.5px;color:#333;letter-spacing:-0.8px;padding-top:1px">13</div>
<div class="c" style="left:524.4px;top:358px;width:13px;height:13px;background:#ebebdf;justify-content:center;font-size:10.5px;color:#333;letter-spacing:-0.8px;padding-top:1px">13</div>
<div class="c" style="left:541px;top:352px;width:30px;height:24px;justify-content:center;font-size:10.5px;color:#333;padding-top:0px;"><span style="letter-spacing:-0.500px">35.0</span></div>
<div class="c" style="left:572px;top:352px;width:63px;height:24px;justify-content:flex-start;padding-left:4px;font-size:10.5px;color:#333;padding-top:0px;"><span style="letter-spacing:0.000px">480<span style="font-size:10px;margin-left:1.5px;letter-spacing:-0.3px">(-2)</span></span></div>
<div class="c" style="left:636px;top:352px;width:88px;height:24px;justify-content:flex-start;padding-left:3px;font-size:10.5px;padding-top:2px;"><span style="letter-spacing:-1.200px"><span class="a" style="word-spacing:1.5px">堀 宣行</span></span></div>
<div class="c" style="left:725px;top:352px;width:27px;height:24px;justify-content:center;font-size:10.5px;color:#333;padding-top:0px;"><span style="letter-spacing:0.000px">14</span></div>
<div class="c" style="left:2px;top:377px;width:26px;height:23px;justify-content:center;font-size:10.5px;color:#333;padding-top:0px;"><span style="letter-spacing:0.000px">8</span></div>
<div class="c" style="left:31px;top:380px;width:16px;height:16px;background:#fff;border:1px solid #bbb;box-sizing:border-box;justify-content:center;font-size:11px;color:#333;padding-top:1px">1</div>
<div class="c" style="left:49px;top:377px;width:22px;height:23px;justify-content:center;font-size:10.5px;color:#333;padding-top:0px;"><span style="letter-spacing:0.000px">1</span></div>
<div class="c" style="left:72px;top:377px;width:153px;height:23px;justify-content:flex-start;padding-left:4px;font-size:10.5px;padding-top:2px;"><span style="letter-spacing:-1.050px"><span class="a">グレンガリー</span></span></div>
<div class="c" style="left:226px;top:377px;width:38px;height:23px;justify-content:center;font-size:10.5px;color:#333;padding-top:0px;"><span style="letter-spacing:-0.400px">せん7</span></div>
<div class="c" style="left:265px;top:377px;width:29px;height:23px;justify-content:center;font-size:10.5px;color:#333;padding-top:0px;"><span style="letter-spacing:-0.500px">54.0</span></div>
<div class="c" style="left:295px;top:377px;width:87px;height:23px;justify-content:flex-start;padding-left:3px;font-size:10.5px;padding-top:2px;"><span style="letter-spacing:-1.200px"><span class="a" style="word-spacing:1.5px">大野 拓弥</span></span></div>
<div class="c" style="left:383px;top:377px;width:39px;height:23px;justify-content:center;font-size:10.5px;color:#333;padding-top:0px;"><span style="letter-spacing:-0.350px">3:31.4</span></div>
<div class="c" style="left:423px;top:377px;width:57px;height:23px;justify-content:flex-start;padding-left:6px;font-size:10.5px;color:#333;padding-top:0px;"><span style="letter-spacing:-0.200px">1&nbsp;&nbsp;1/4</span></div>
<div class="c" style="left:483.0px;top:382px;width:13px;height:13px;background:#ebebdf;justify-content:center;font-size:10.5px;color:#333;letter-spacing:-0.8px;padding-top:1px">1</div>
<div class="c" style="left:496.8px;top:382px;width:13px;height:13px;background:#ebebdf;justify-content:center;font-size:10.5px;color:#333;letter-spacing:-0.8px;padding-top:1px">1</div>
<div class="c" style="left:510.6px;top:382px;width:13px;height:13px;background:#ebebdf;justify-content:center;font-size:10.5px;color:#333;letter-spacing:-0.8px;padding-top:1px">1</div>
<div class="c" style="left:524.4px;top:382px;width:13px;height:13px;background:#ebebdf;justify-content:center;font-size:10.5px;color:#333;letter-spacing:-0.8px;padding-top:1px">1</div>
<div class="c" style="left:541px;top:377px;width:30px;height:23px;justify-content:center;font-size:10.5px;color:#333;padding-top:0px;"><span style="letter-spacing:-0.500px">36.8</span></div>
<div class="c" style="left:572px;top:377px;width:63px;height:23px;justify-content:flex-start;padding-left:4px;font-size:10.5px;color:#333;padding-top:0px;"><span style="letter-spacing:0.000px">450<span style="font-size:10px;margin-left:1.5px;letter-spacing:-0.3px">(+12)</span></span></div>
<div class="c" style="left:636px;top:377px;width:88px;height:23px;justify-content:flex-start;padding-left:3px;font-size:10.5px;padding-top:2px;"><span style="letter-spacing:-1.200px"><span class="a" style="word-spacing:1.5px">萩原 清</span></span></div>
<div class="c" style="left:725px;top:377px;width:27px;height:23px;justify-content:center;font-size:10.5px;color:#333;padding-top:0px;"><span style="letter-spacing:0.000px">13</span></div>
<div class="c" style="left:2px;top:401px;width:26px;height:24px;justify-content:center;font-size:10.5px;color:#333;padding-top:0px;"><span style="letter-spacing:0.000px">9</span></div>
<div class="c" style="left:31px;top:405px;width:16px;height:16px;background:#2f8a36;justify-content:center;font-size:11px;color:#fff;padding-top:1px">6</div>
<div class="c" style="left:49px;top:401px;width:22px;height:24px;justify-content:center;font-size:10.5px;color:#333;padding-top:0px;"><span style="letter-spacing:0.000px">10</span></div>
<div class="c" style="left:72px;top:401px;width:153px;height:24px;justify-content:flex-start;padding-left:4px;font-size:10.5px;padding-top:2px;"><span style="letter-spacing:-1.050px"><span class="a">レクセランス</span></span></div>
<div class="c" style="left:226px;top:401px;width:38px;height:24px;justify-content:center;font-size:10.5px;color:#333;padding-top:0px;"><span style="letter-spacing:-0.400px">牡5</span></div>
<div class="c" style="left:265px;top:401px;width:29px;height:24px;justify-content:center;font-size:10.5px;color:#333;padding-top:0px;"><span style="letter-spacing:-0.500px">55.0</span></div>
<div class="c" style="left:295px;top:401px;width:87px;height:24px;justify-content:flex-start;padding-left:3px;font-size:10.5px;padding-top:2px;"><span style="letter-spacing:-1.200px"><span class="a" style="word-spacing:1.5px">横山 武史</span></span></div>
<div class="c" style="left:383px;top:401px;width:39px;height:24px;justify-content:center;font-size:10.5px;color:#333;padding-top:0px;"><span style="letter-spacing:-0.350px">3:31.4</span></div>
<div class="c" style="left:423px;top:401px;width:57px;height:24px;justify-content:flex-start;padding-left:4px;font-size:9px;color:#333;padding-top:1px;"><span style="letter-spacing:-0.300px">クビ</span></div>
<div class="c" style="left:483.0px;top:406px;width:13px;height:13px;background:#ebebdf;justify-content:center;font-size:10.5px;color:#333;letter-spacing:-0.8px;padding-top:1px">10</div>
<div class="c" style="left:496.8px;top:406px;width:13px;height:13px;background:#ebebdf;justify-content:center;font-size:10.5px;color:#333;letter-spacing:-0.8px;padding-top:1px">9</div>
<div class="c" style="left:510.6px;top:406px;width:13px;height:13px;background:#ebebdf;justify-content:center;font-size:10.5px;color:#333;letter-spacing:-0.8px;padding-top:1px">5</div>
<div class="c" style="left:524.4px;top:406px;width:13px;height:13px;background:#ebebdf;justify-content:center;font-size:10.5px;color:#333;letter-spacing:-0.8px;padding-top:1px">4</div>
<div class="c" style="left:541px;top:401px;width:30px;height:24px;justify-content:center;font-size:10.5px;color:#333;padding-top:0px;"><span style="letter-spacing:-0.500px">35.9</span></div>
<div class="c" style="left:572px;top:401px;width:63px;height:24px;justify-content:flex-start;padding-left:4px;font-size:10.5px;color:#333;padding-top:0px;"><span style="letter-spacing:0.000px">488<span style="font-size:10px;margin-left:1.5px;letter-spacing:-0.3px">(-6)</span></span></div>
<div class="c" style="left:636px;top:401px;width:88px;height:24px;justify-content:flex-start;padding-left:3px;font-size:10.5px;padding-top:2px;"><span style="letter-spacing:-1.200px"><span class="a" style="word-spacing:1.5px">池添 学</span></span></div>
<div class="c" style="left:725px;top:401px;width:27px;height:24px;justify-content:center;font-size:10.5px;color:#333;padding-top:0px;"><span style="letter-spacing:0.000px">1</span></div>
<div class="c" style="left:2px;top:426px;width:26px;height:24px;justify-content:center;font-size:10.5px;color:#333;padding-top:0px;"><span style="letter-spacing:0.000px">10</span></div>
<div class="c" style="left:31px;top:430px;width:16px;height:16px;background:#d7282f;justify-content:center;font-size:11px;color:#fff;padding-top:1px">3</div>
<div class="c" style="left:49px;top:426px;width:22px;height:24px;justify-content:center;font-size:10.5px;color:#333;padding-top:0px;"><span style="letter-spacing:0.000px">4</span></div>
<div class="c" style="left:72px;top:426px;width:153px;height:24px;justify-content:flex-start;padding-left:4px;font-size:10.5px;padding-top:2px;"><span style="letter-spacing:-1.050px"><span class="a">アドマイヤアルバ</span></span></div>
<div class="c" style="left:212px;top:428.5px;width:12px;height:12px;background:#6b4a1e;justify-content:center;font-size:9px;color:#fff;font-weight:bold">B</div>
<div class="c" style="left:226px;top:426px;width:38px;height:24px;justify-content:center;font-size:10.5px;color:#333;padding-top:0px;"><span style="letter-spacing:-0.400px">せん7</span></div>
<div class="c" style="left:265px;top:426px;width:29px;height:24px;justify-content:center;font-size:10.5px;color:#333;padding-top:0px;"><span style="letter-spacing:-0.500px">53.0</span></div>
<div class="c" style="left:295px;top:426px;width:87px;height:24px;justify-content:flex-start;padding-left:3px;font-size:10.5px;padding-top:2px;"><span style="letter-spacing:-1.200px"><span class="a" style="word-spacing:1.5px">団野 大成</span></span></div>
<div class="c" style="left:383px;top:426px;width:39px;height:24px;justify-content:center;font-size:10.5px;color:#333;padding-top:0px;"><span style="letter-spacing:-0.350px">3:31.5</span></div>
<div class="c" style="left:423px;top:426px;width:57px;height:24px;justify-content:flex-start;padding-left:4px;font-size:9px;color:#333;padding-top:1px;"><span style="letter-spacing:-0.300px">クビ</span></div>
<div class="c" style="left:483.0px;top:432px;width:13px;height:13px;background:#ebebdf;justify-content:center;font-size:10.5px;color:#333;letter-spacing:-0.8px;padding-top:1px">13</div>
<div class="c" style="left:496.8px;top:432px;width:13px;height:13px;background:#ebebdf;justify-content:center;font-size:10.5px;color:#333;letter-spacing:-0.8px;padding-top:1px">13</div>
<div class="c" style="left:510.6px;top:432px;width:13px;height:13px;background:#ebebdf;justify-content:center;font-size:10.5px;color:#333;letter-spacing:-0.8px;padding-top:1px">14</div>
<div class="c" style="left:524.4px;top:432px;width:13px;height:13px;background:#ebebdf;justify-content:center;font-size:10.5px;color:#333;letter-spacing:-0.8px;padding-top:1px">13</div>
<div class="c" style="left:541px;top:426px;width:30px;height:24px;justify-content:center;font-size:10.5px;color:#333;padding-top:0px;"><span style="letter-spacing:-0.500px">35.3</span></div>
<div class="c" style="left:572px;top:426px;width:63px;height:24px;justify-content:flex-start;padding-left:4px;font-size:10.5px;color:#333;padding-top:0px;"><span style="letter-spacing:0.000px">480<span style="font-size:10px;margin-left:1.5px;letter-spacing:-0.3px">(+4)</span></span></div>
<div class="c" style="left:636px;top:426px;width:88px;height:24px;justify-content:flex-start;padding-left:3px;font-size:10.5px;padding-top:2px;"><span style="letter-spacing:-1.200px"><span class="a" style="word-spacing:1.5px">柄崎 孝</span></span></div>
<div class="c" style="left:725px;top:426px;width:27px;height:24px;justify-content:center;font-size:10.5px;color:#333;padding-top:0px;"><span style="letter-spacing:0.000px">12</span></div>
<div class="c" style="left:2px;top:451px;width:26px;height:23px;justify-content:center;font-size:10.5px;color:#333;padding-top:0px;"><span style="letter-spacing:0.000px">11</span></div>
<div class="c" style="left:31px;top:454px;width:16px;height:16px;background:#f7e12b;justify-content:center;font-size:11px;color:#333;padding-top:1px">5</div>
<div class="c" style="left:49px;top:451px;width:22px;height:23px;justify-content:center;font-size:10.5px;color:#333;padding-top:0px;"><span style="letter-spacing:0.000px">8</span></div>
<div class="c" style="left:72px;top:451px;width:153px;height:23px;justify-content:flex-start;padding-left:4px;font-size:10.5px;padding-top:2px;"><span style="letter-spacing:-1.050px"><span class="a">アンティシペイト</span></span></div>
<div class="c" style="left:226px;top:451px;width:38px;height:23px;justify-content:center;font-size:10.5px;color:#333;padding-top:0px;"><span style="letter-spacing:-0.400px">牡5</span></div>
<div class="c" style="left:265px;top:451px;width:29px;height:23px;justify-content:center;font-size:10.5px;color:#333;padding-top:0px;"><span style="letter-spacing:-0.500px">55.0</span></div>
<div class="c" style="left:295px;top:451px;width:87px;height:23px;justify-content:flex-start;padding-left:3px;font-size:10.5px;padding-top:2px;"><span style="letter-spacing:-1.200px"><span class="a" style="word-spacing:1.5px">田辺 裕信</span></span></div>
<div class="c" style="left:383px;top:451px;width:39px;height:23px;justify-content:center;font-size:10.5px;color:#333;padding-top:0px;"><span style="letter-spacing:-0.350px">3:31.9</span></div>
<div class="c" style="left:423px;top:451px;width:57px;height:23px;justify-content:flex-start;padding-left:6px;font-size:10.5px;color:#333;padding-top:0px;"><span style="letter-spacing:-0.200px">2&nbsp;&nbsp;1/2</span></div>
<div class="c" style="left:483.0px;top:456px;width:13px;height:13px;background:#ebebdf;justify-content:center;font-size:10.5px;color:#333;letter-spacing:-0.8px;padding-top:1px">2</div>
<div class="c" style="left:496.8px;top:456px;width:13px;height:13px;background:#ebebdf;justify-content:center;font-size:10.5px;color:#333;letter-spacing:-0.8px;padding-top:1px">2</div>
<div class="c" style="left:510.6px;top:456px;width:13px;height:13px;background:#ebebdf;justify-content:center;font-size:10.5px;color:#333;letter-spacing:-0.8px;padding-top:1px">2</div>
<div class="c" style="left:524.4px;top:456px;width:13px;height:13px;background:#ebebdf;justify-content:center;font-size:10.5px;color:#333;letter-spacing:-0.8px;padding-top:1px">2</div>
<div class="c" style="left:541px;top:451px;width:30px;height:23px;justify-content:center;font-size:10.5px;color:#333;padding-top:0px;"><span style="letter-spacing:-0.500px">36.8</span></div>
<div class="c" style="left:572px;top:451px;width:63px;height:23px;justify-content:flex-start;padding-left:4px;font-size:10.5px;color:#333;padding-top:0px;"><span style="letter-spacing:0.000px">512<span style="font-size:10px;margin-left:1.5px;letter-spacing:-0.3px">(-2)</span></span></div>
<div class="c" style="left:636px;top:451px;width:88px;height:23px;justify-content:flex-start;padding-left:3px;font-size:10.5px;padding-top:2px;"><span style="letter-spacing:-1.200px"><span class="a" style="word-spacing:1.5px">国枝 栄</span></span></div>
<div class="c" style="left:725px;top:451px;width:27px;height:23px;justify-content:center;font-size:10.5px;color:#333;padding-top:0px;"><span style="letter-spacing:0.000px">4</span></div>
<div class="c" style="left:2px;top:475px;width:26px;height:24px;justify-content:center;font-size:10.5px;color:#333;padding-top:0px;"><span style="letter-spacing:0.000px">12</span></div>
<div class="c" style="left:31px;top:479px;width:16px;height:16px;background:#f3b4c8;justify-content:center;font-size:11px;color:#333;padding-top:1px">8</div>
<div class="c" style="left:49px;top:475px;width:22px;height:24px;justify-content:center;font-size:10.5px;color:#333;padding-top:0px;"><span style="letter-spacing:0.000px">13</span></div>
<div class="c" style="left:72px;top:475px;width:153px;height:24px;justify-content:flex-start;padding-left:4px;font-size:10.5px;padding-top:2px;"><span style="letter-spacing:-1.050px"><span class="a">ゴースト</span></span></div>
<div class="c" style="left:226px;top:475px;width:38px;height:24px;justify-content:center;font-size:10.5px;color:#333;padding-top:0px;"><span style="letter-spacing:-0.400px">せん6</span></div>
<div class="c" style="left:265px;top:475px;width:29px;height:24px;justify-content:center;font-size:10.5px;color:#333;padding-top:0px;"><span style="letter-spacing:-0.500px">54.0</span></div>
<div class="c" style="left:295px;top:475px;width:87px;height:24px;justify-content:flex-start;padding-left:3px;font-size:10.5px;padding-top:2px;"><span style="letter-spacing:-1.200px"><span class="a" style="word-spacing:1.5px">北村 宏司</span></span></div>
<div class="c" style="left:383px;top:475px;width:39px;height:24px;justify-content:center;font-size:10.5px;color:#333;padding-top:0px;"><span style="letter-spacing:-0.350px">3:32.1</span></div>
<div class="c" style="left:423px;top:475px;width:57px;height:24px;justify-content:flex-start;padding-left:6px;font-size:10.5px;color:#333;padding-top:0px;"><span style="letter-spacing:-0.200px">1&nbsp;&nbsp;1/4</span></div>
<div class="c" style="left:483.0px;top:480px;width:13px;height:13px;background:#ebebdf;justify-content:center;font-size:10.5px;color:#333;letter-spacing:-0.8px;padding-top:1px">3</div>
<div class="c" style="left:496.8px;top:480px;width:13px;height:13px;background:#ebebdf;justify-content:center;font-size:10.5px;color:#333;letter-spacing:-0.8px;padding-top:1px">3</div>
<div class="c" style="left:510.6px;top:480px;width:13px;height:13px;background:#ebebdf;justify-content:center;font-size:10.5px;color:#333;letter-spacing:-0.8px;padding-top:1px">3</div>
<div class="c" style="left:524.4px;top:480px;width:13px;height:13px;background:#ebebdf;justify-content:center;font-size:10.5px;color:#333;letter-spacing:-0.8px;padding-top:1px">4</div>
<div class="c" style="left:541px;top:475px;width:30px;height:24px;justify-content:center;font-size:10.5px;color:#333;padding-top:0px;"><span style="letter-spacing:-0.500px">36.7</span></div>
<div class="c" style="left:572px;top:475px;width:63px;height:24px;justify-content:flex-start;padding-left:4px;font-size:10.5px;color:#333;padding-top:0px;"><span style="letter-spacing:0.000px">492<span style="font-size:10px;margin-left:1.5px;letter-spacing:-0.3px">(+2)</span></span></div>
<div class="c" style="left:636px;top:475px;width:88px;height:24px;justify-content:flex-start;padding-left:3px;font-size:10.5px;padding-top:2px;"><span style="letter-spacing:-1.200px"><span class="a" style="word-spacing:1.5px">橋口 慎介</span></span></div>
<div class="c" style="left:725px;top:475px;width:27px;height:24px;justify-content:center;font-size:10.5px;color:#333;padding-top:0px;"><span style="letter-spacing:0.000px">10</span></div>
<div class="c" style="left:2px;top:500px;width:26px;height:24px;justify-content:center;font-size:10.5px;color:#333;padding-top:0px;"><span style="letter-spacing:0.000px">13</span></div>
<div class="c" style="left:31px;top:504px;width:16px;height:16px;background:#f5a21f;justify-content:center;font-size:11px;color:#333;padding-top:1px">7</div>
<div class="c" style="left:49px;top:500px;width:22px;height:24px;justify-content:center;font-size:10.5px;color:#333;padding-top:0px;"><span style="letter-spacing:0.000px">12</span></div>
<div class="c" style="left:72px;top:500px;width:153px;height:24px;justify-content:flex-start;padding-left:4px;font-size:10.5px;padding-top:2px;"><span style="letter-spacing:-1.050px"><span class="a">メロディーレーン</span></span></div>
<div class="c" style="left:226px;top:500px;width:38px;height:24px;justify-content:center;font-size:10.5px;color:#333;padding-top:0px;"><span style="letter-spacing:-0.400px">牝6</span></div>
<div class="c" style="left:265px;top:500px;width:29px;height:24px;justify-content:center;font-size:10.5px;color:#333;padding-top:0px;"><span style="letter-spacing:-0.500px">52.0</span></div>
<div class="c" style="left:295px;top:500px;width:87px;height:24px;justify-content:flex-start;padding-left:3px;font-size:10.5px;padding-top:2px;"><span style="letter-spacing:-1.200px"><span class="a" style="word-spacing:1.5px">菅原 明良</span></span></div>
<div class="c" style="left:383px;top:500px;width:39px;height:24px;justify-content:center;font-size:10.5px;color:#333;padding-top:0px;"><span style="letter-spacing:-0.350px">3:32.2</span></div>
<div class="c" style="left:423px;top:500px;width:57px;height:24px;justify-content:flex-start;padding-left:4px;font-size:9px;color:#333;padding-top:1px;"><span style="letter-spacing:-0.300px">クビ</span></div>
<div class="c" style="left:483.0px;top:506px;width:13px;height:13px;background:#ebebdf;justify-content:center;font-size:10.5px;color:#333;letter-spacing:-0.8px;padding-top:1px">7</div>
<div class="c" style="left:496.8px;top:506px;width:13px;height:13px;background:#ebebdf;justify-content:center;font-size:10.5px;color:#333;letter-spacing:-0.8px;padding-top:1px">7</div>
<div class="c" style="left:510.6px;top:506px;width:13px;height:13px;background:#ebebdf;justify-content:center;font-size:10.5px;color:#333;letter-spacing:-0.8px;padding-top:1px">8</div>
<div class="c" style="left:524.4px;top:506px;width:13px;height:13px;background:#ebebdf;justify-content:center;font-size:10.5px;color:#333;letter-spacing:-0.8px;padding-top:1px">8</div>
<div class="c" style="left:541px;top:500px;width:30px;height:24px;justify-content:center;font-size:10.5px;color:#333;padding-top:0px;"><span style="letter-spacing:-0.500px">36.4</span></div>
<div class="c" style="left:572px;top:500px;width:63px;height:24px;justify-content:flex-start;padding-left:4px;font-size:10.5px;color:#333;padding-top:0px;"><span style="letter-spacing:0.000px">346<span style="font-size:10px;margin-left:1.5px;letter-spacing:-0.3px">(-6)</span></span></div>
<div class="c" style="left:636px;top:500px;width:88px;height:24px;justify-content:flex-start;padding-left:3px;font-size:10.5px;padding-top:2px;"><span style="letter-spacing:-1.200px"><span class="a" style="word-spacing:1.5px">森田 直行</span></span></div>
<div class="c" style="left:725px;top:500px;width:27px;height:24px;justify-content:center;font-size:10.5px;color:#333;padding-top:0px;"><span style="letter-spacing:0.000px">7</span></div>
<div class="c" style="left:2px;top:525px;width:26px;height:23px;justify-content:center;font-size:10.5px;color:#333;padding-top:0px;"><span style="letter-spacing:0.000px">14</span></div>
<div class="c" style="left:31px;top:528px;width:16px;height:16px;background:#f5a21f;justify-content:center;font-size:11px;color:#333;padding-top:1px">7</div>
<div class="c" style="left:49px;top:525px;width:22px;height:23px;justify-content:center;font-size:10.5px;color:#333;padding-top:0px;"><span style="letter-spacing:0.000px">11</span></div>
<div class="c" style="left:72px;top:525px;width:153px;height:23px;justify-content:flex-start;padding-left:4px;font-size:10.5px;padding-top:2px;"><span style="letter-spacing:-1.050px"><span class="a">カウディーリョ</span></span></div>
<div class="c" style="left:226px;top:525px;width:38px;height:23px;justify-content:center;font-size:10.5px;color:#333;padding-top:0px;"><span style="letter-spacing:-0.400px">牡6</span></div>
<div class="c" style="left:265px;top:525px;width:29px;height:23px;justify-content:center;font-size:10.5px;color:#333;padding-top:0px;"><span style="letter-spacing:-0.500px">56.0</span></div>
<div class="c" style="left:295px;top:525px;width:87px;height:23px;justify-content:flex-start;padding-left:3px;font-size:10.5px;padding-top:2px;"><span style="letter-spacing:-1.200px"><span class="a" style="word-spacing:1.5px">M.デムーロ</span></span></div>
<div class="c" style="left:383px;top:525px;width:39px;height:23px;justify-content:center;font-size:10.5px;color:#333;padding-top:0px;"><span style="letter-spacing:-0.350px">3:32.2</span></div>
<div class="c" style="left:423px;top:525px;width:57px;height:23px;justify-content:flex-start;padding-left:4px;font-size:9px;color:#333;padding-top:1px;"><span style="letter-spacing:-0.300px">アタマ</span></div>
<div class="c" style="left:483.0px;top:530px;width:13px;height:13px;background:#ebebdf;justify-content:center;font-size:10.5px;color:#333;letter-spacing:-0.8px;padding-top:1px">5</div>
<div class="c" style="left:496.8px;top:530px;width:13px;height:13px;background:#ebebdf;justify-content:center;font-size:10.5px;color:#333;letter-spacing:-0.8px;padding-top:1px">6</div>
<div class="c" style="left:510.6px;top:530px;width:13px;height:13px;background:#ebebdf;justify-content:center;font-size:10.5px;color:#333;letter-spacing:-0.8px;padding-top:1px">6</div>
<div class="c" style="left:524.4px;top:530px;width:13px;height:13px;background:#ebebdf;justify-content:center;font-size:10.5px;color:#333;letter-spacing:-0.8px;padding-top:1px">6</div>
<div class="c" style="left:541px;top:525px;width:30px;height:23px;justify-content:center;font-size:10.5px;color:#333;padding-top:0px;"><span style="letter-spacing:-0.500px">36.6</span></div>
<div class="c" style="left:572px;top:525px;width:63px;height:23px;justify-content:flex-start;padding-left:4px;font-size:10.5px;color:#333;padding-top:0px;"><span style="letter-spacing:0.000px">456<span style="font-size:10px;margin-left:1.5px;letter-spacing:-0.3px">(+6)</span></span></div>
<div class="c" style="left:636px;top:525px;width:88px;height:23px;justify-content:flex-start;padding-left:3px;font-size:10.5px;padding-top:2px;"><span style="letter-spacing:-1.200px"><span class="a" style="word-spacing:1.5px">堀 宣行</span></span></div>
<div class="c" style="left:725px;top:525px;width:27px;height:23px;justify-content:center;font-size:10.5px;color:#333;padding-top:0px;"><span style="letter-spacing:0.000px">9</span></div>
<div class="t" style="left:0.60px;top:561px;font-size:10.5px;line-height:14px;color:#333;"><span id="h_time" style="letter-spacing:-1.300px"><b>タイム</b></span></div>
<div style="left:2px;top:582px;width:103px;height:46px;background:#e9edf1"></div>
<div style="left:1px;top:581px;width:752px;height:1px;background:#c8c8c8;"></div>
<div style="left:1px;top:604px;width:752px;height:1px;background:#c8c8c8;"></div>
<div style="left:1px;top:628px;width:752px;height:1px;background:#c8c8c8;"></div>
<div style="left:1px;top:581px;width:1px;height:48px;background:#c8c8c8;"></div>
<div style="left:105px;top:581px;width:1px;height:48px;background:#c8c8c8;"></div>
<div style="left:752px;top:581px;width:1px;height:48px;background:#c8c8c8;"></div>
<div class="c" style="left:2px;top:582px;width:103px;height:22px;justify-content:flex-start;padding-left:9px;font-size:10.5px;color:#555;"><span id="halon" style="letter-spacing:-1.200px">ハロンタイム</span></div>
<div class="c" style="left:2px;top:605px;width:103px;height:23px;justify-content:flex-start;padding-left:9px;font-size:10.5px;color:#555"><span style="letter-spacing:0.000px">上り</span></div>
<div class="c" style="left:106px;top:582px;width:646px;height:22px;justify-content:flex-start;padding-left:9px;font-size:10px;color:#333;"><span id="halonv" style="letter-spacing:0.117px">13.0 - 11.7 - 12.4 - 12.5 - 12.0 - 12.1 - 12.4 - 13.1 - 13.0 - 12.7 - 12.7 - 12.6 - 12.2 - 12.2 - 11.4 - 11.9 - 12.2</span></div>
<div class="c" style="left:106px;top:605px;width:646px;height:23px;justify-content:flex-start;padding-left:9px;font-size:10px;color:#333;"><span id="agariv" style="letter-spacing:0.011px">4F 47.7 - 3F 35.5</span></div>
<div class="t" style="left:0.60px;top:641px;font-size:10.5px;line-height:14px;color:#333;"><span id="h_corner" style="letter-spacing:-1.171px"><b>コーナー通過順位</b></span></div>
<div style="left:2px;top:661px;width:103px;height:93px;background:#e9edf1"></div>
<div style="left:1px;top:660px;width:752px;height:1px;background:#c8c8c8;"></div>
<div style="left:1px;top:684px;width:752px;height:1px;background:#c8c8c8;"></div>
<div style="left:1px;top:707px;width:752px;height:1px;background:#c8c8c8;"></div>
<div style="left:1px;top:730px;width:752px;height:1px;background:#c8c8c8;"></div>
<div style="left:1px;top:754px;width:752px;height:1px;background:#c8c8c8;"></div>
<div style="left:1px;top:660px;width:1px;height:95px;background:#c8c8c8;"></div>
<div style="left:105px;top:660px;width:1px;height:95px;background:#c8c8c8;"></div>
<div style="left:752px;top:660px;width:1px;height:95px;background:#c8c8c8;"></div>
<div class="c" style="left:2px;top:661px;width:103px;height:23px;justify-content:flex-start;padding-left:9px;font-size:10.5px;color:#555;"><span style="letter-spacing:-0.900px">1コーナー</span></div>
<div class="c" style="left:106px;top:661px;width:646px;height:23px;justify-content:flex-start;padding-left:9px;font-size:10.5px;color:#333;"><span id="cv0" style="letter-spacing:-0.158px">1=8-13,<span class="n9">9</span>(7,11)12(3,5)10(2,14)(4,6)</span></div>
<div class="c" style="left:2px;top:685px;width:103px;height:22px;justify-content:flex-start;padding-left:9px;font-size:10.5px;color:#555;"><span style="letter-spacing:-0.900px">2コーナー</span></div>
<div class="c" style="left:106px;top:685px;width:646px;height:22px;justify-content:flex-start;padding-left:9px;font-size:10.5px;color:#333;"><span id="cv1" style="letter-spacing:-0.208px">1=8-13,<span class="n9">9</span>,7,11(3,12)(5,10)(2,14)(4,6)</span></div>
<div class="c" style="left:2px;top:708px;width:103px;height:22px;justify-content:flex-start;padding-left:9px;font-size:10.5px;color:#555;"><span style="letter-spacing:-0.900px">3コーナー(2周目)</span></div>
<div class="c" style="left:106px;top:708px;width:646px;height:22px;justify-content:flex-start;padding-left:9px;font-size:10.5px;color:#333;"><span id="cv2" style="letter-spacing:-0.478px">1=8(13,<span class="n9">9</span>)10(7,11)12(3,5)(14,6)-2,4</span></div>
<div class="c" style="left:2px;top:731px;width:103px;height:23px;justify-content:flex-start;padding-left:9px;font-size:10.5px;color:#555;"><span style="letter-spacing:-0.900px">4コーナー(2周目)</span></div>
<div class="c" style="left:106px;top:731px;width:646px;height:23px;justify-content:flex-start;padding-left:9px;font-size:10.5px;color:#333;"><span id="cv3" style="letter-spacing:-0.202px">1-8,<span class="n9">9</span>(13,10)(7,11)(3,5,12)(14,6)(2,4)</span></div>
<div class="t" style="left:2.00px;top:781px;font-size:13px;line-height:18px;color:#333;"><span id="h_pay" style="letter-spacing:-1.300px"><b>払戻金</b></span></div>
<div style="left:0px;top:807px;width:756px;height:1px;background:#e4e4e4;"></div>
<div style="left:0px;top:806px;width:97px;height:2px;background:#22a03a;"></div>
<div style="left:2px;top:821px;width:750px;height:89px;background:#f8f8f8"></div>
<div style="left:2px;top:821px;width:39px;height:89px;background:#ebeae0"></div>
<div style="left:252px;top:821px;width:40px;height:89px;background:#ebeae0"></div>
<div style="left:504px;top:821px;width:38px;height:89px;background:#ebeae0"></div>
<div style="left:1px;top:820px;width:752px;height:1px;background:#cfcfcf;"></div>
<div style="left:1px;top:910px;width:752px;height:1px;background:#cfcfcf;"></div>
<div style="left:1px;top:842px;width:752px;height:1px;background:#cfcfcf;"></div>
<div style="left:1px;top:820px;width:1px;height:91px;background:#cfcfcf;"></div>
<div style="left:41px;top:820px;width:1px;height:91px;background:#cfcfcf;"></div>
<div style="left:102px;top:820px;width:1px;height:91px;background:#cfcfcf;"></div>
<div style="left:186px;top:820px;width:1px;height:91px;background:#cfcfcf;"></div>
<div style="left:251px;top:820px;width:1px;height:91px;background:#cfcfcf;"></div>
<div style="left:292px;top:820px;width:1px;height:91px;background:#cfcfcf;"></div>
<div style="left:353px;top:820px;width:1px;height:91px;background:#cfcfcf;"></div>
<div style="left:437px;top:820px;width:1px;height:91px;background:#cfcfcf;"></div>
<div style="left:503px;top:820px;width:1px;height:91px;background:#cfcfcf;"></div>
<div style="left:542px;top:820px;width:1px;height:91px;background:#cfcfcf;"></div>
<div style="left:603px;top:820px;width:1px;height:91px;background:#cfcfcf;"></div>
<div style="left:688px;top:820px;width:1px;height:91px;background:#cfcfcf;"></div>
<div style="left:752px;top:820px;width:1px;height:91px;background:#cfcfcf;"></div>
<div style="left:42px;top:865px;width:209px;height:0;border-top:1px dashed #d4d4d4"></div>
<div style="left:293px;top:865px;width:210px;height:0;border-top:1px dashed #d4d4d4"></div>
<div style="left:503px;top:865px;width:250px;height:1px;background:#cfcfcf;"></div>
<div style="left:42px;top:888px;width:209px;height:0;border-top:1px dashed #d4d4d4"></div>
<div style="left:293px;top:888px;width:210px;height:0;border-top:1px dashed #d4d4d4"></div>
<div style="left:503px;top:888px;width:250px;height:1px;background:#cfcfcf;"></div>
<div class="c" style="left:2px;top:821px;width:39px;height:21px;justify-content:center;font-size:10.5px;color:#222;padding-top:1px;"><span style="letter-spacing:0.000px">単勝</span></div>
<div class="c" style="left:2px;top:843px;width:39px;height:67px;justify-content:center;font-size:10.5px;color:#222;padding-top:1px;"><span style="letter-spacing:0.000px">複勝</span></div>
<div class="c" style="left:252px;top:821px;width:40px;height:21px;justify-content:center;font-size:10.5px;color:#222;padding-top:1px;"><span style="letter-spacing:0.000px">枠連</span></div>
<div class="c" style="left:252px;top:843px;width:40px;height:67px;justify-content:center;font-size:10.5px;color:#222;padding-top:1px;"><span style="letter-spacing:-0.300px">ワイド</span></div>
<div class="c" style="left:504px;top:821px;width:38px;height:21px;justify-content:center;font-size:10.5px;color:#222;padding-top:1px;"><span style="letter-spacing:0.000px">馬連</span></div>
<div class="c" style="left:504px;top:843px;width:38px;height:22px;justify-content:center;font-size:10.5px;color:#222;padding-top:1px;"><span style="letter-spacing:0.000px">馬単</span></div>
<div class="c" style="left:504px;top:866px;width:38px;height:22px;justify-content:center;font-size:10.5px;color:#222;padding-top:1px;"><span style="letter-spacing:-0.800px">3連複</span></div>
<div class="c" style="left:504px;top:889px;width:38px;height:21px;justify-content:center;font-size:10.5px;color:#222;padding-top:1px;"><span style="letter-spacing:-0.800px">3連単</span></div>
<div class="c" style="left:42px;top:821px;width:60px;height:21px;justify-content:center;font-size:11.5px;color:#333;padding-top:1px;"><span style="letter-spacing:0.400px">9</span></div>
<div class="c" style="left:103px;top:821px;width:83px;height:21px;justify-content:flex-end;padding-right:3px;font-size:11.5px;color:#333;padding-top:1px;"><span style="letter-spacing:0.200px">400<span class="sm">円</span></span></div>
<div class="c" style="left:187px;top:821px;width:64px;height:21px;justify-content:flex-end;padding-right:4px;font-size:11.5px;color:#333;padding-top:1px;"><span style="letter-spacing:0.300px">2<span class="sm2">番人気</span></span></div>
<div class="c" style="left:42px;top:843px;width:60px;height:22px;justify-content:center;font-size:11.5px;color:#333;padding-top:1px;"><span style="letter-spacing:0.400px">9</span></div>
<div class="c" style="left:103px;top:843px;width:83px;height:22px;justify-content:flex-end;padding-right:3px;font-size:11.5px;color:#333;padding-top:1px;"><span style="letter-spacing:0.200px">190<span class="sm">円</span></span></div>
<div class="c" style="left:187px;top:843px;width:64px;height:22px;justify-content:flex-end;padding-right:4px;font-size:11.5px;color:#333;padding-top:1px;"><span style="letter-spacing:0.300px">2<span class="sm2">番人気</span></span></div>
<div class="c" style="left:42px;top:866px;width:60px;height:22px;justify-content:center;font-size:11.5px;color:#333;padding-top:1px;"><span style="letter-spacing:0.400px">14</span></div>
<div class="c" style="left:103px;top:866px;width:83px;height:22px;justify-content:flex-end;padding-right:3px;font-size:11.5px;color:#333;padding-top:1px;"><span style="letter-spacing:0.200px">1,270<span class="sm">円</span></span></div>
<div class="c" style="left:187px;top:866px;width:64px;height:22px;justify-content:flex-end;padding-right:4px;font-size:11.5px;color:#333;padding-top:1px;"><span style="letter-spacing:0.300px">11<span class="sm2">番人気</span></span></div>
<div class="c" style="left:42px;top:889px;width:60px;height:21px;justify-content:center;font-size:11.5px;color:#333;padding-top:1px;"><span style="letter-spacing:0.400px">6</span></div>
<div class="c" style="left:103px;top:889px;width:83px;height:21px;justify-content:flex-end;padding-right:3px;font-size:11.5px;color:#333;padding-top:1px;"><span style="letter-spacing:0.200px">320<span class="sm">円</span></span></div>
<div class="c" style="left:187px;top:889px;width:64px;height:21px;justify-content:flex-end;padding-right:4px;font-size:11.5px;color:#333;padding-top:1px;"><span style="letter-spacing:0.300px">4<span class="sm2">番人気</span></span></div>
<div class="c" style="left:293px;top:821px;width:60px;height:21px;justify-content:center;font-size:11.5px;color:#333;padding-top:1px;"><span style="letter-spacing:0.400px">6-8</span></div>
<div class="c" style="left:354px;top:821px;width:83px;height:21px;justify-content:flex-end;padding-right:3px;font-size:11.5px;color:#333;padding-top:1px;"><span style="letter-spacing:0.200px">1,660<span class="sm">円</span></span></div>
<div class="c" style="left:438px;top:821px;width:65px;height:21px;justify-content:flex-end;padding-right:4px;font-size:11.5px;color:#333;padding-top:1px;"><span style="letter-spacing:0.300px">7<span class="sm2">番人気</span></span></div>
<div class="c" style="left:293px;top:843px;width:60px;height:22px;justify-content:center;font-size:11.5px;color:#333;padding-top:1px;"><span style="letter-spacing:0.400px">9-14</span></div>
<div class="c" style="left:354px;top:843px;width:83px;height:22px;justify-content:flex-end;padding-right:3px;font-size:11.5px;color:#333;padding-top:1px;"><span style="letter-spacing:0.200px">5,730<span class="sm">円</span></span></div>
<div class="c" style="left:438px;top:843px;width:65px;height:22px;justify-content:flex-end;padding-right:4px;font-size:11.5px;color:#333;padding-top:1px;"><span style="letter-spacing:0.300px">51<span class="sm2">番人気</span></span></div>
<div class="c" style="left:293px;top:866px;width:60px;height:22px;justify-content:center;font-size:11.5px;color:#333;padding-top:1px;"><span style="letter-spacing:0.400px">6-9</span></div>
<div class="c" style="left:354px;top:866px;width:83px;height:22px;justify-content:flex-end;padding-right:3px;font-size:11.5px;color:#333;padding-top:1px;"><span style="letter-spacing:0.200px">890<span class="sm">円</span></span></div>
<div class="c" style="left:438px;top:866px;width:65px;height:22px;justify-content:flex-end;padding-right:4px;font-size:11.5px;color:#333;padding-top:1px;"><span style="letter-spacing:0.300px">7<span class="sm2">番人気</span></span></div>
<div class="c" style="left:293px;top:889px;width:60px;height:21px;justify-content:center;font-size:11.5px;color:#333;padding-top:1px;"><span style="letter-spacing:0.400px">6-14</span></div>
<div class="c" style="left:354px;top:889px;width:83px;height:21px;justify-content:flex-end;padding-right:3px;font-size:11.5px;color:#333;padding-top:1px;"><span style="letter-spacing:0.200px">11,810<span class="sm">円</span></span></div>
<div class="c" style="left:438px;top:889px;width:65px;height:21px;justify-content:flex-end;padding-right:4px;font-size:11.5px;color:#333;padding-top:1px;"><span style="letter-spacing:0.300px">71<span class="sm2">番人気</span></span></div>
<div class="c" style="left:543px;top:821px;width:60px;height:21px;justify-content:center;font-size:11.5px;color:#333;padding-top:1px;"><span style="letter-spacing:0.400px">9-14</span></div>
<div class="c" style="left:604px;top:821px;width:84px;height:21px;justify-content:flex-end;padding-right:3px;font-size:11.5px;color:#333;padding-top:1px;"><span style="letter-spacing:0.200px">16,670<span class="sm">円</span></span></div>
<div class="c" style="left:689px;top:821px;width:63px;height:21px;justify-content:flex-end;padding-right:4px;font-size:11.5px;color:#333;padding-top:1px;"><span style="letter-spacing:0.300px">45<span class="sm2">番人気</span></span></div>
<div class="c" style="left:543px;top:843px;width:60px;height:22px;justify-content:center;font-size:11.5px;color:#333;padding-top:1px;"><span style="letter-spacing:0.400px">9-14</span></div>
<div class="c" style="left:604px;top:843px;width:84px;height:22px;justify-content:flex-end;padding-right:3px;font-size:11.5px;color:#333;padding-top:1px;"><span style="letter-spacing:0.200px">23,130<span class="sm">円</span></span></div>
<div class="c" style="left:689px;top:843px;width:63px;height:22px;justify-content:flex-end;padding-right:4px;font-size:11.5px;color:#333;padding-top:1px;"><span style="letter-spacing:0.300px">78<span class="sm2">番人気</span></span></div>
<div class="c" style="left:543px;top:866px;width:60px;height:22px;justify-content:center;font-size:11.5px;color:#333;padding-top:1px;"><span style="letter-spacing:0.400px">6-9-14</span></div>
<div class="c" style="left:604px;top:866px;width:84px;height:22px;justify-content:flex-end;padding-right:3px;font-size:11.5px;color:#333;padding-top:1px;"><span style="letter-spacing:0.200px">73,340<span class="sm">円</span></span></div>
<div class="c" style="left:689px;top:866px;width:63px;height:22px;justify-content:flex-end;padding-right:4px;font-size:11.5px;color:#333;padding-top:1px;"><span style="letter-spacing:0.300px">166<span class="sm2">番人気</span></span></div>
<div class="c" style="left:543px;top:889px;width:60px;height:21px;justify-content:center;font-size:11.5px;color:#333;padding-top:1px;"><span style="letter-spacing:0.400px">9-14-6</span></div>
<div class="c" style="left:604px;top:889px;width:84px;height:21px;justify-content:flex-end;padding-right:3px;font-size:11.5px;color:#333;padding-top:1px;"><span style="letter-spacing:0.200px">317,940<span class="sm">円</span></span></div>
<div class="c" style="left:689px;top:889px;width:63px;height:21px;justify-content:flex-end;padding-right:4px;font-size:11.5px;color:#333;padding-top:1px;"><span style="letter-spacing:0.300px">764<span class="sm2">番人気</span></span></div>
</body></html>
